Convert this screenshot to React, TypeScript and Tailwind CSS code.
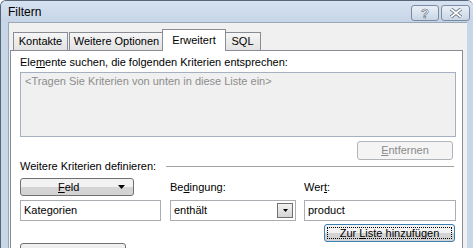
import React from "react";

const font = { fontFamily: '"Liberation Sans", Arial, sans-serif' };

function Tab(props: { label: string; active?: boolean; w: string }) {
    if (props.active) {
        return (
            <div
                className={`relative z-10 -mb-px -mx-[2px] flex h-[22px] items-start justify-center border border-b-0 border-[#898c95] bg-white pt-[2px] text-[11px] ${props.w}`}
            >
                {props.label}
            </div>
        );
    }
    return (
        <div
            className={`flex h-[18px] items-center justify-center border border-b-0 border-[#898c95] bg-gradient-to-b from-[#f6f6f6] to-[#e2e2e2] text-[11px] ${props.w}`}
        >
            {props.label}
        </div>
    );
}

function DownTriangle() {
    return (
        <svg width="7" height="4" viewBox="0 0 7 4">
            <path d="M0 0h7L3.5 4z" fill="#000" />
        </svg>
    );
}

export default function App() {
    return (
        <div
            className="flex h-[248px] w-[473px] flex-col overflow-hidden rounded-t-[6px] border border-b-0 border-r-0 border-[#59667a] bg-[#c8d7e8] text-black"
            style={font}
        >
            {/* title bar */}
            <div className="flex h-[21px] shrink-0 items-center bg-gradient-to-b from-[#d6e2f0] to-[#c6d5e7]">
                <span className="pl-[7px] pt-[1px] text-[12px]">Filtern</span>
                <div className="ml-auto flex gap-[2px] pr-[3px] pt-[3px]">
                    <div className="flex h-[16px] w-[28px] items-center justify-center rounded-[3px] border border-[#7b8a9d] bg-gradient-to-b from-[#e9eff7] to-[#c9d6e6]">
                        <span className="text-[13px] font-bold leading-none text-white [-webkit-text-stroke:0.6px_#5a6676]">
                            ?
                        </span>
                    </div>
                    <div className="flex h-[16px] w-[29px] items-center justify-center rounded-[3px] border border-[#7b8a9d] bg-gradient-to-b from-[#e9eff7] to-[#c9d6e6]">
                        <svg width="14" height="10" viewBox="0 0 14 10">
                            <path d="M2 1l10 8M12 1L2 9" stroke="#5a6676" strokeWidth="3.4" />
                            <path d="M2 1l10 8M12 1L2 9" stroke="#fff" strokeWidth="1.8" />
                        </svg>
                    </div>
                </div>
            </div>

            {/* client area */}
            <div className="ml-[7px] mr-[6px] flex flex-1 flex-col border-l border-t border-[#9aa7b7] bg-[#f0f0f0] pl-[1px] pr-[4px]">
                {/* tabs */}
                <div className="ml-[3px] mt-[6px] flex items-end">
                    <Tab label="Kontakte" w="w-[55px]" />
                    <div className="w-px" />
                    <Tab label="Weitere Optionen" w="w-[95px]" />
                    <Tab label="Erweitert" w="w-[64px]" active />
                    <Tab label="SQL" w="w-[37px]" />
                </div>

                {/* panel */}
                <div className="flex flex-1 flex-col border border-b-0 border-[#898c95] bg-white pl-[9px] pr-[6px] text-[11px]">
                    <div className="mt-[5px] h-[13px] leading-[13px]">
                        Ele<u>m</u>ente suchen, die folgenden Kriterien entsprechen:
                    </div>
                    <div className="mt-[3px] h-[65px] border border-[#a5b1c0] bg-[#f0f0f0] px-[4px] pt-[2px] leading-[13px] text-[#8d8d8d]">
                        &lt;Tragen Sie Kriterien von unten in diese Liste ein&gt;
                    </div>
                    <div className="mt-[4px] flex justify-end pr-[3px]">
                        <div className="flex h-[19px] w-[96px] items-center justify-center rounded-[3px] border border-[#b0b5ba] bg-[#f4f4f4] text-[#8a8a8a]">
                            <span>
                                <u>E</u>ntfernen
                            </span>
                        </div>
                    </div>
                    <div className="flex h-[13px] items-center gap-[10px] leading-[13px]">
                        <span>Weitere Kriterien definieren:</span>
                        <div className="mr-[2px] h-px flex-1 bg-[#a0a0a0]" />
                    </div>

                    {/* criteria */}
                    <div className="mt-[5px] grid grid-cols-[141px_127px_152px] gap-y-[4px] [column-gap:8px]">
                        <div className="flex h-[18px] w-[114px] items-center rounded-[3px] border border-[#707070] bg-gradient-to-b from-[#f2f2f2] from-50% to-[#d4d4d4] to-50% pl-[37px] pr-[8px]">
                            <span>
                                <u>F</u>eld
                            </span>
                            <span className="ml-auto flex">
                                <DownTriangle />
                            </span>
                        </div>
                        <div className="flex items-center pl-[1px]">
                            Be<u>d</u>ingung:
                        </div>
                        <div className="flex items-center">
                            Wer<u>t</u>:
                        </div>

                        <div className="flex h-[21px] items-center border border-[#abadb3] bg-white px-[3px]">
                            Kategorien
                        </div>
                        <div className="ml-[1px] flex h-[21px] items-center border border-[#abadb3] bg-white pl-[3px] pr-[2px]">
                            <span>enthält</span>
                            <div className="ml-auto flex h-[15px] w-[16px] items-center justify-center border border-[#707070] bg-gradient-to-b from-[#f2f2f2] to-[#d5d5d5]">
                                <svg width="5" height="3" viewBox="0 0 5 3">
                                    <path d="M0 0h5L2.5 3z" fill="#000" />
                                </svg>
                            </div>
                        </div>
                        <div className="flex h-[21px] items-center border border-[#abadb3] bg-white px-[3px]">
                            product
                        </div>
                    </div>

                    <div className="mt-[3px] flex justify-end pr-[1px]">
                        <div className="flex h-[18px] w-[131px] items-center justify-center rounded-[3px] border border-[#3c7fb1] bg-gradient-to-b from-[#f2f2f2] from-50% to-[#d4d4d4] to-50% p-[2px]">
                            <div className="flex h-full w-full items-center justify-center border border-dotted border-black">
                                <span>
                                    Zur <u>L</u>iste hinzufügen
                                </span>
                            </div>
                        </div>
                    </div>
                    <div className="mt-[1px] h-[18px] w-[106px] rounded-[3px] border border-[#707070] bg-gradient-to-b from-[#f2f2f2] to-[#dcdcdc]" />
                </div>
            </div>
        </div>
    );
}
